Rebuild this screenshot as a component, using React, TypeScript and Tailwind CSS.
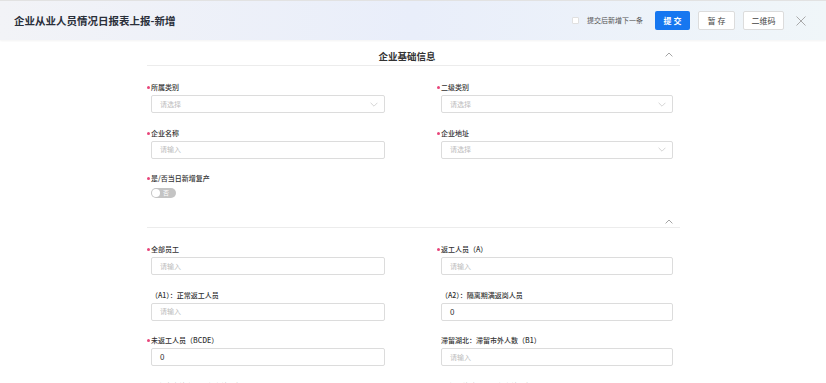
const font = "font-['Noto_Sans_CJK_SC','Noto_Sans',sans-serif]";

function ChevronUp({ className = '' }: { className?: string }) {
  return (
    <svg width="8" height="5" viewBox="0 0 8 5" className={className}>
      <path d="M0.6 4.4 L4 1 L7.4 4.4" fill="none" stroke="#9a9a9a" strokeWidth="0.9" />
    </svg>
  );
}

function ChevronDown() {
  return (
    <svg width="8" height="5" viewBox="0 0 8 5">
      <path d="M0.6 0.8 L4 4.2 L7.4 0.8" fill="none" stroke="#c9c9c9" strokeWidth="0.8" />
    </svg>
  );
}

function Star() {
  return <span className="inline-block align-middle w-[3px] h-[3px] -ml-[4px] mr-[1px] mb-[1px] rounded-full bg-[#e8457a]" />;
}

type FieldProps = {
  label: string;
  required?: boolean;
  value?: string;
  select?: boolean;
};

function Field({ label, required, value, select }: FieldProps) {
  return (
    <div className="pl-[4px]">
      <div className="h-[12px] leading-[12px] text-[7px] font-medium text-[#333] whitespace-nowrap">
        {required && <Star />}
        {label}
      </div>
      <div className="mt-[2px] h-[18px] flex items-center justify-between border border-[#dcdcdc] rounded-[2px] pl-[8px] pr-[6px]">
        {value ? (
          <span className="text-[8px] text-[#333]">{value}</span>
        ) : (
          <span className="text-[7px] text-[#bdbdbd]">{select ? '请选择' : '请输入'}</span>
        )}
        {select && <ChevronDown />}
      </div>
    </div>
  );
}

export default function App() {
  return (
    <div className={`w-[826px] h-[383px] overflow-hidden bg-white ${font}`}>
      <header className="h-[40px] flex items-center pl-[14px] pr-[20px] border-t border-[#e2e2e2] bg-gradient-to-r from-[#f2f3f7] via-[#e9eefa] to-[#f0f6f9] shadow-[0_1px_2px_rgba(0,0,0,0.05)]">
        <h1 className="text-[10.5px] font-bold text-[#2a2f3a]">企业从业人员情况日报表上报-新增</h1>
        <div className="ml-auto flex items-center">
          <span className="w-[7px] h-[7px] bg-white border border-[#e0e0e0] rounded-[1px]" />
          <span className="ml-[8px] text-[7px] text-[#555]">提交后新增下一条</span>
          <button className="ml-[12px] w-[35px] h-[19px] rounded-[2px] bg-[#1677f0] text-white text-[8px] font-bold tracking-[2px] pl-[2px]">提交</button>
          <button className="ml-[8px] w-[37px] h-[19px] rounded-[2px] bg-white border border-[#dcdcdc] text-[#444] text-[8px] tracking-[2px] pl-[2px]">暂存</button>
          <button className="ml-[8px] w-[41px] h-[19px] rounded-[2px] bg-white border border-[#dcdcdc] text-[#444] text-[8px]">二维码</button>
          <svg width="10" height="10" viewBox="0 0 10 10" className="ml-[12px]">
            <path d="M0.5 0.5 L9.5 9.5 M9.5 0.5 L0.5 9.5" stroke="#a0a0a0" strokeWidth="0.9" />
          </svg>
        </div>
      </header>

      <main className="w-[533px] ml-[147px]">
        <section>
          <div className="h-[26px] border-b border-[#ececec] flex items-end justify-between">
            <span className="w-[8px]" />
            <h2 className="pb-[4px] mr-[6px] text-[9.5px] leading-[10px] font-bold text-[#333]">企业基础信息</h2>
            <ChevronUp className="mb-[8px] mr-[7px]" />
          </div>
          <div className="grid grid-cols-[238px_236px] gap-x-[52px] gap-y-[13.5px] pt-[15px] pb-[4px]">
            <Field label="所属类别" required select />
            <Field label="二级类别" required select />
            <Field label="企业名称" required />
            <Field label="企业地址" required select />
            <div className="pl-[4px]">
              <div className="h-[12px] leading-[12px] text-[7px] font-medium text-[#333]">
                <Star />
                是/否当日新增复产
              </div>
              <div className="mt-[4px] w-[25px] h-[10px] rounded-full bg-[#c4c4c4] flex items-center px-[1px]">
                <span className="w-[8px] h-[8px] rounded-full bg-white" />
                <span className="ml-[3px] text-[6px] leading-[6px] text-white">否</span>
              </div>
            </div>
          </div>
        </section>

        <section>
          <div className="h-[26px] border-b border-[#ececec] flex items-end justify-end">
            <ChevronUp className="mb-[3px] mr-[7px]" />
          </div>
          <div className="grid grid-cols-[238px_236px] gap-x-[52px] gap-y-[13.5px] pt-[15px]">
            <Field label="全部员工" required />
            <Field label="返工人员（A）" required />
            <Field label="（A1）：正常返工人员" />
            <Field label="（A2）：隔离期满返岗人员" value="0" />
            <Field label="未返工人员（BCDE）" required value="0" />
            <Field label="滞留湖北：滞留市外人数（B1）" />
            <Field label="滞留省内外市：滞留市外人数（B2）" />
            <Field label="滞留其他地区：滞留市外人数（B3）" />
          </div>
        </section>
      </main>
    </div>
  );
}
